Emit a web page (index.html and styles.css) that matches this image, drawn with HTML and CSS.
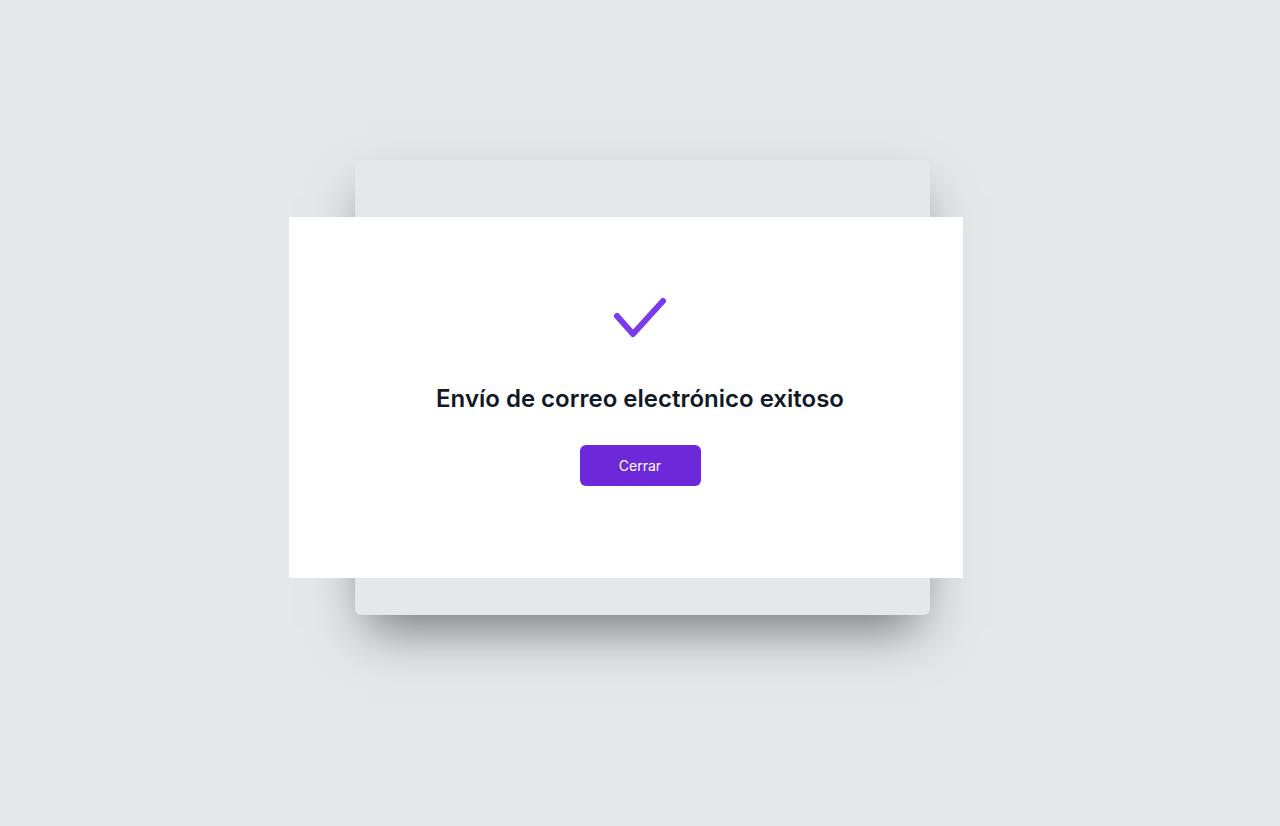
FILE: index.html
```html
<!DOCTYPE html>
<html lang="es">
<head>
<meta charset="utf-8">
<title>Envío exitoso</title>
<link rel="stylesheet" href="styles.css">
</head>
<body>
<main class="stage">
  <div class="card">
    <section class="modal">
      <div class="modal-content">
        <svg class="check" width="56" height="48" viewBox="0 0 56 48" aria-hidden="true">
          <polyline points="5,22 21,40 51,7" fill="none" stroke="#7c3aed" stroke-width="6" stroke-linecap="round" stroke-linejoin="round"/>
        </svg>
        <h1 class="title">Envío de correo electrónico exitoso</h1>
        <button class="btn" type="button">Cerrar</button>
      </div>
    </section>
  </div>
</main>
</body>
</html>
```

FILE: styles.css
```css
* { box-sizing: border-box; }
html, body { margin: 0; padding: 0; }
body {
  background: #e5e7eb;
  font-family: Inter, "Noto Sans", "Liberation Sans", sans-serif;
  min-height: 826px;
}
.stage {
  padding: 160px 0 0 355px;
}
.card {
  position: relative;
  width: 575px;
  height: 455px;
  background: #e5e7eb;
  border-radius: 6px;
  box-shadow: 0 25px 50px -12px rgba(0, 0, 0, 0.5);
}
.modal {
  position: absolute;
  left: -66px;
  top: 57px;
  width: 674px;
  height: 361px;
  background: #ffffff;
}
.modal-content {
  display: flex;
  flex-direction: column;
  align-items: center;
  padding: 77px 0 0 28px;
}
.check { display: block; }
.title {
  margin: 43px 0 0;
  font-size: 24px;
  line-height: 28px;
  font-weight: 600;
  color: #111827;
}
.btn {
  margin-top: 32px;
  width: 121px;
  height: 41px;
  border: 0;
  border-radius: 6px;
  background: #6d28d9;
  color: #ffffff;
  font-family: inherit;
  font-size: 14px;
  font-weight: 400;
  cursor: pointer;
}
```
